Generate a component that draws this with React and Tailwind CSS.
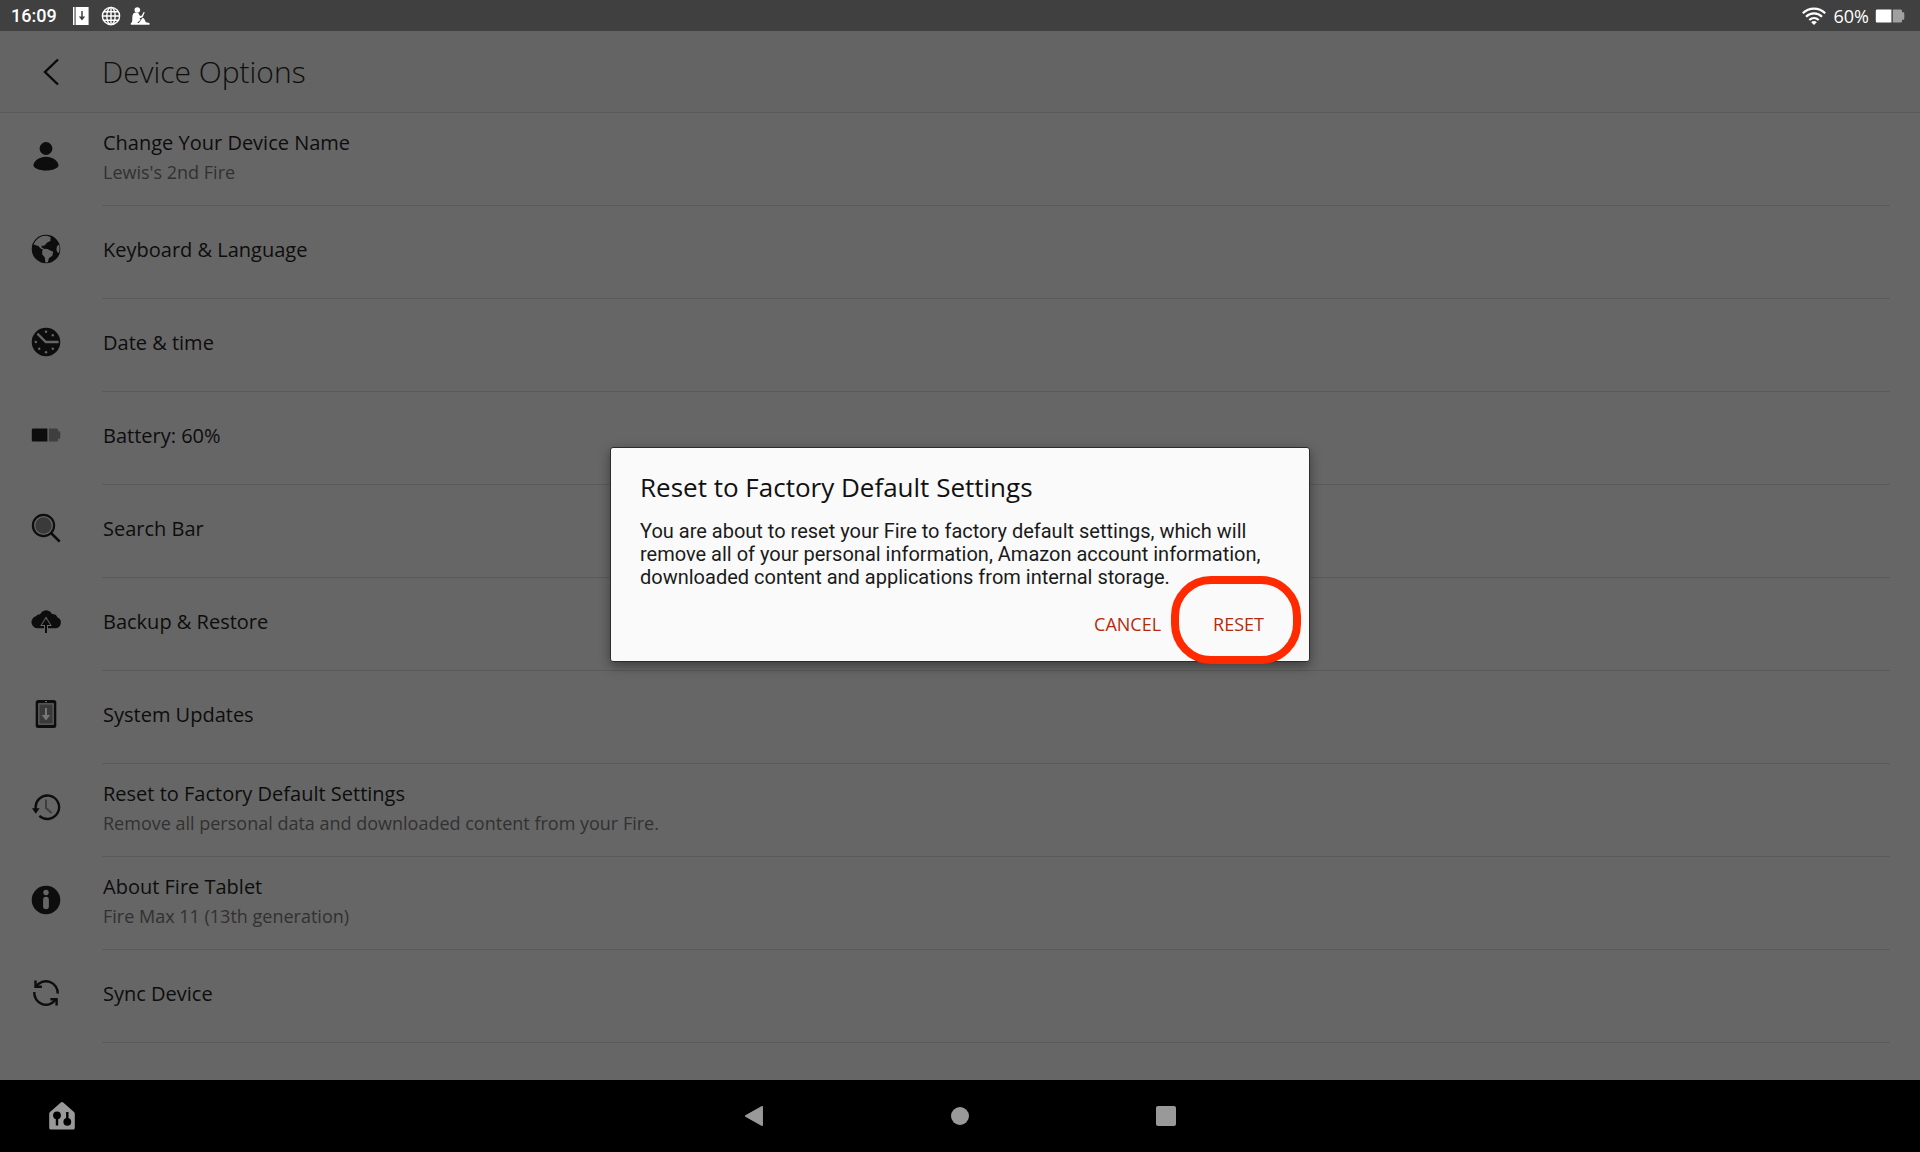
import { useState } from "react";

const PersonIcon = () => (
  <svg viewBox="0 0 30 30" className="h-[30px] w-[30px]" fill="#0d0d0d" aria-hidden="true">
    <circle cx="15" cy="7.5" r="6.4" />
    <path d="M2.4 24.4C3 19.4 8.6 15.8 15 15.8s12 3.6 12.6 8.6c-.6 2.8-6 5-12.6 5s-12-2.2-12.6-5Z" />
  </svg>
);

const EarthIcon = () => (
  <svg viewBox="0 0 30 30" className="h-[30px] w-[30px]" aria-hidden="true">
    <circle cx="15" cy="15" r="14.3" fill="#0d0d0d" />
    <path
      fill="#666"
      d="M2.6 10.4C4.2 6.4 7.6 3.2 11.8 2l4-.3 3.8 1.4-.2 3.8-3.2 1.5-2.6 3-2.6.3-.7 1.6 1.6.8 1.2 1.5-3.2-.9-2.6-2.8-4.7-1.5Z"
    />
    <path
      fill="#666"
      d="m12 14.8 4.6.2 2.2 1.3 3.4 1.5-.8 4-3.5 2.5-1 4-2.6.2-.5-5-2.700-3.300.2-3.600.7-1.800Z"
    />
    <path fill="#666" d="M28.200 10.400c-1.900.8-2.900 2.800-2.700 5 .1 1.800.9 3.100 2.400 3.700.8-2.800.9-5.800.3-8.700Z" />
  </svg>
);

const ClockIcon = () => (
  <svg viewBox="0 0 30 30" className="h-[30px] w-[30px]" aria-hidden="true">
    <circle cx="15" cy="15" r="14.3" fill="#0d0d0d" />
    <path d="M6.4 6.6 14.8 15h12.8" fill="none" stroke="#666" strokeWidth="2.3" />
    <g fill="#666">
      <circle cx="15" cy="4.8" r="1.2" />
      <circle cx="21.8" cy="8.2" r="1.2" />
      <circle cx="4.8" cy="15" r="1.2" />
      <circle cx="8.2" cy="21.8" r="1.2" />
      <circle cx="15" cy="25.2" r="1.2" />
      <circle cx="21.8" cy="21.8" r="1.2" />
    </g>
  </svg>
);

const BatteryIcon = ({ full, rest }) => (
  <svg viewBox="0 0 30 30" className="h-[30px] w-[30px] shrink-0" aria-hidden="true">
    <path fill={full} d="M2.2 8.4H16.4v13.2H2.2c-.8 0-1.4-.6-1.4-1.4V9.8c0-.8.6-1.4 1.4-1.4Z" />
    <path
      fill={rest}
      d="M17.8 8.4h7.6c1 0 1.6.6 1.6 1.4v1.4h1c.8 0 1.3.5 1.3 1.3v5c0 .8-.5 1.3-1.3 1.3h-1v1.4c0 .8-.6 1.4-1.6 1.4h-7.6Z"
    />
  </svg>
);

const SearchIcon = () => (
  <svg viewBox="0 0 30 30" className="h-[30px] w-[30px]" fill="none" aria-hidden="true">
    <circle cx="12.5" cy="12.5" r="8.2" fill="#3a3a3a" />
    <circle cx="12.5" cy="12.5" r="10.6" stroke="#0d0d0d" strokeWidth="2.2" />
    <path d="m20 20 8.7 8.7" stroke="#0d0d0d" strokeWidth="2.6" />
  </svg>
);

const CloudIcon = () => (
  <svg viewBox="0 0 30 30" className="h-[30px] w-[30px]" aria-hidden="true">
    <path
      fill="#0d0d0d"
      d="M7 22.3a6.2 6.2 0 0 1-2.2-12.1 6 6 0 0 1 4.2-2A7.8 7.8 0 0 1 14.5 4.3c3 0 5.3 1.4 6.4 3.6 3 0 4.9 1.2 5.4 3.3A5.8 5.8 0 0 1 23.5 22.3Z"
    />
    <path d="M15 27V14" fill="none" stroke="#666" strokeWidth="4" />
    <path d="m15 10.5 5.8 9.6H9.2Z" fill="#666" />
    <path d="M15 27V16" stroke="#0d0d0d" strokeWidth="2" />
    <path d="m15 12.5 4.2 6.6h-8.4Z" fill="#0d0d0d" />
  </svg>
);

const TabletIcon = () => (
  <svg viewBox="0 0 30 30" className="h-[30px] w-[30px]" aria-hidden="true">
    <rect x="4.7" y="1" width="20.6" height="28" rx="2.5" fill="#0d0d0d" />
    <rect x="7.2" y="4.2" width="15.6" height="21.6" fill="#666" />
    <rect x="8.4" y="5.4" width="13.2" height="19.2" fill="#3a3a3a" />
    <rect x="14" y="2" width="2" height="1.2" fill="#666" />
    <path fill="#777" d="M14 9h2v7h3.3L15 21.4 10.7 16H14Z" />
  </svg>
);

const HistoryIcon = () => (
  <svg viewBox="0 0 30 30" className="h-[30px] w-[30px]" fill="none" aria-hidden="true">
    <path d="M4.8 17A11.7 11.7 0 1 1 8.4 23.8" stroke="#0d0d0d" strokeWidth="2.4" />
    <path d="M1 16.2h7.6L4.8 21.8Z" fill="#0d0d0d" />
    <path d="M15 7.6V16l5.6 5" stroke="#3f3f3f" strokeWidth="2" />
  </svg>
);

const InfoIcon = () => (
  <svg viewBox="0 0 30 30" className="h-[30px] w-[30px]" aria-hidden="true">
    <circle cx="15" cy="15" r="14.3" fill="#0d0d0d" />
    <circle cx="15" cy="7.5" r="2.7" fill="#666" />
    <rect x="12.1" y="11.8" width="5.8" height="12.4" rx="2.9" fill="#666" />
  </svg>
);

const SyncIcon = () => (
  <svg viewBox="0 0 30 30" className="h-[30px] w-[30px]" fill="none" stroke="#0d0d0d" strokeWidth="2.4" aria-hidden="true">
    <path d="M26.7 15.6A11.7 11.7 0 0 0 5.2 8.6" />
    <path d="M4.5 2.6v6.2h6.4" />
    <path d="M3.3 14a11.7 11.7 0 0 0 21.5 7.4" />
    <path d="M19.4 21.2h6.2v6.2" />
  </svg>
);

const options = [
  { icon: <PersonIcon />, title: "Change Your Device Name", detail: "Lewis's 2nd Fire" },
  { icon: <EarthIcon />, title: "Keyboard & Language" },
  { icon: <ClockIcon />, title: "Date & time" },
  { icon: <BatteryIcon full="#0d0d0d" rest="#3f3f3f" />, title: "Battery: 60%" },
  { icon: <SearchIcon />, title: "Search Bar" },
  { icon: <CloudIcon />, title: "Backup & Restore" },
  { icon: <TabletIcon />, title: "System Updates" },
  {
    icon: <HistoryIcon />,
    title: "Reset to Factory Default Settings",
    detail: "Remove all personal data and downloaded content from your Fire.",
  },
  { icon: <InfoIcon />, title: "About Fire Tablet", detail: "Fire Max 11 (13th generation)" },
  { icon: <SyncIcon />, title: "Sync Device" },
];

function StatusBar() {
  return (
    <div className="flex h-[31px] items-center justify-between bg-[#404040] pl-[11px] pr-[15px] text-lg leading-6 text-white">
      <div className="flex items-center">
        <span className="font-[Roboto,sans-serif] font-medium">16:09</span>
        <svg viewBox="0 0 18 20" className="ml-[15px] h-5 w-[18px]" aria-hidden="true">
          <path fill="#fff" d="M1 1h1.5v18H1ZM3.6 1h13v18h-13Z" />
          <path d="M10 5v7" stroke="#404040" strokeWidth="1.5" />
          <path d="M6.8 10.5h6.4L10 14.5Z" fill="#404040" />
        </svg>
        <svg viewBox="0 0 20 20" className="ml-[11px] h-5 w-5" fill="none" stroke="#fff" strokeWidth="1.4" aria-hidden="true">
          <circle cx="10" cy="10" r="8.6" />
          <ellipse cx="10" cy="10" rx="4.2" ry="8.6" />
          <path d="M10 1.4v17.2M1.4 10h17.2M2.6 5.8h14.8M2.6 14.2h14.8" />
        </svg>
        <svg viewBox="0 0 20 20" className="ml-[9px] h-5 w-5" fill="#fff" aria-hidden="true">
          <circle cx="7.3" cy="4" r="2.8" />
          <path d="M3.6 7.2c1.6-1.3 4.5-1 5.3.7l1.1 2.2 1.8-.5 2-3.8.9.4-2 5-3.3 1.1 1.2 1.2-3.4 3.4h1.600l3.300-4.300c.7-.8 1.600-.6 2.200.3l1.600 3.300 3.600.8v1.800H.8v-1.700c1-.5 1.500-1.500 1.500-3.100 0-2.700 0-5.600 1.300-6.800Z" />
        </svg>
      </div>
      <div className="flex items-center">
        <svg viewBox="0 0 24 18" className="h-[18px] w-6" fill="none" stroke="#fff" strokeWidth="2.2" aria-hidden="true">
          <path d="M.8 6.2c6.400-6.200 16-6.200 22.400 0" />
          <path d="M4 9.800c4.600-4.500 11.400-4.500 16 0" />
          <path d="M7.3 13c2.800-2.600 6.600-2.600 9.400 0" />
          <path d="M9.2 15.2c1.600-1.500 4-1.500 5.600 0L12 18Z" fill="#fff" stroke="none" />
        </svg>
        <span className="ml-2 mr-[6px] font-medium">60%</span>
        <BatteryIcon full="#ffffff" rest="#a0a0a0" />
      </div>
    </div>
  );
}

function ResetDialog({ onClose }) {
  return (
    <div className="absolute inset-0 flex items-center justify-center pb-0.5">
      <div
        role="dialog"
        aria-labelledby="reset-title"
        className="w-[700px] rounded-[3px] border border-[#2c2c2c] bg-[#fafafa] pb-[17px] pl-[29px] pr-[25px] pt-[21px] shadow-[0_4px_12px_rgba(0,0,0,0.4)]"
      >
        <h2 id="reset-title" className="text-[26px] leading-9 text-[#111]">
          Reset to Factory Default Settings
        </h2>
        <p className="mt-[15px] font-[Roboto,sans-serif] text-xl leading-[23px] text-[#1b1b1b]">
          You are about to reset your Fire to factory default settings, which will remove all of your personal
          information, Amazon account information, downloaded content and applications from internal storage.
        </p>
        <div className="mt-[15px] flex justify-end text-lg leading-6 text-[#b62a0c]">
          <button type="button" onClick={onClose} className="px-5 py-2">
            CANCEL
          </button>
          <div className="relative ml-3">
            <button type="button" onClick={onClose} className="px-5 py-2">
              RESET
            </button>
            <span className="pointer-events-none absolute -bottom-5 -right-[17px] h-[88px] w-[130px] rounded-[40px] border-8 border-[#ff2a00]" />
          </div>
        </div>
      </div>
    </div>
  );
}

function NavBar() {
  return (
    <nav className="grid h-[72px] grid-cols-[1fr_auto_1fr] items-center bg-black">
      <button type="button" aria-label="Device dashboard" className="ml-[47px] justify-self-start">
        <svg viewBox="0 0 30 30" className="h-[30px] w-[30px]" aria-hidden="true">
          <path
            fill="#999"
            d="M13.8 1.6c.8-.7 1.6-.7 2.4 0l10.5 9.2c.8.7 1.1 1.3 1.1 2.3v13.7c0 1.2-.6 1.8-1.8 1.8H4c-1.2 0-1.8-.6-1.8-1.8V13.1c0-1 .3-1.6 1.1-2.3Z"
          />
          <circle cx="10" cy="14.3" r="3.9" />
          <circle cx="20.3" cy="20.8" r="3.9" />
          <path d="M10 14v10.5M20.3 11v9" stroke="#000" strokeWidth="2.4" />
        </svg>
      </button>
      <div className="flex">
        <button type="button" aria-label="Back" className="flex w-[206px] justify-center">
          <svg viewBox="0 0 20 22" className="h-[22px] w-5" aria-hidden="true">
            <path
              fill="#999"
              stroke="#999"
              strokeWidth="1.5"
              strokeLinejoin="round"
              d="M1.7 11 18.2 1.7v18.6Z"
            />
          </svg>
        </button>
        <button type="button" aria-label="Home" className="flex w-[206px] items-center justify-center">
          <span className="h-[18px] w-[18px] rounded-full bg-[#999]" />
        </button>
        <button type="button" aria-label="Recent apps" className="flex w-[206px] items-center justify-center">
          <span className="h-5 w-5 rounded-[2px] bg-[#999]" />
        </button>
      </div>
    </nav>
  );
}

function App() {
  const [showDialog, setShowDialog] = useState(true);

  return (
    <div className="flex min-h-screen flex-col bg-[#666] font-['Open_Sans','Noto_Sans',sans-serif]">
      <StatusBar />
      <main className="relative flex-1">
        <header className="flex h-[82px] items-center border-b border-[#5b5b5b] bg-[#646464]">
          <button type="button" aria-label="Back" className="flex w-[102px] justify-center">
            <svg viewBox="0 0 16 28" className="h-7 w-4" fill="none" stroke="#0a0a0a" strokeWidth="2.4" aria-hidden="true">
              <path d="M15 1.5 2 14l13 12.5" />
            </svg>
          </button>
          <h1 className="text-[30px] font-light leading-9 text-[#0d0d0d]">Device Options</h1>
        </header>
        <ul className="pr-[30px]">
          {options.map((item) => (
            <li key={item.title} className="flex h-[93px]">
              <span className="flex w-[102px] items-center pb-[7px] pl-[31px]">{item.icon}</span>
              <button
                type="button"
                className="flex flex-1 flex-col justify-center gap-[3px] border-b border-[#5a5a5a] pb-[5px] pl-px text-left"
              >
                <span className="text-xl leading-7 text-[#0d0d0d]">{item.title}</span>
                {item.detail && <span className="text-lg leading-6 text-[#313131]">{item.detail}</span>}
              </button>
            </li>
          ))}
        </ul>
        {showDialog && <ResetDialog onClose={() => setShowDialog(false)} />}
      </main>
      <NavBar />
    </div>
  );
}

export default App;
